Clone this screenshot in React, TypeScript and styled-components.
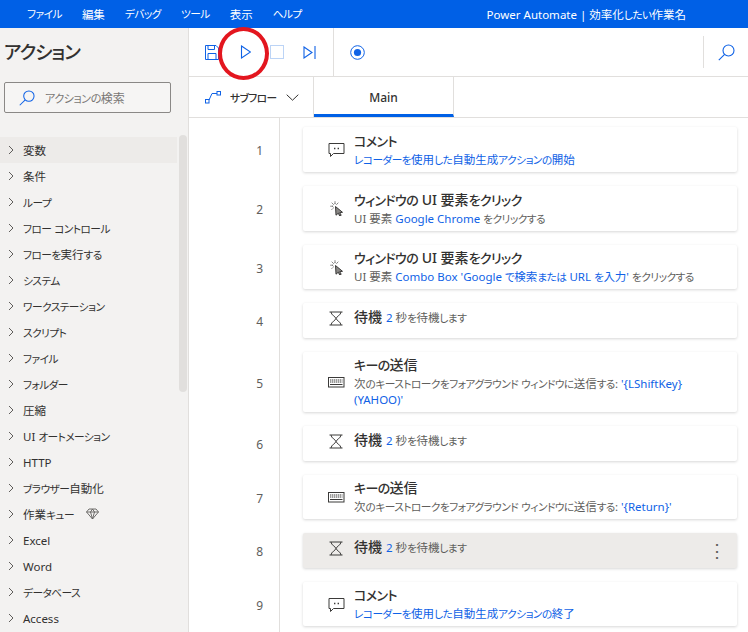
import React from 'react'
import styled, { createGlobalStyle } from 'styled-components'

const blue = '#0f62e6'
const jp = `"Noto Sans", "Noto Sans CJK JP", sans-serif`

const actions = [
  '変数', '条件', 'ループ', 'フロー コントロール', 'フローを実行する', 'システム', 'ワークステーション',
  'スクリプト', 'ファイル', 'フォルダー', '圧縮', 'UI オートメーション', 'HTTP', 'ブラウザー自動化',
  '作業キュー', 'Excel', 'Word', 'データベース', 'Access',
]

const menus = ['ファイル', '編集', 'デバッグ', 'ツール', '表示', 'ヘルプ']

// the original font has much narrower kana than kanji, so kana runs get their own span
function T({ children }: { children: string }) {
  return (
    <>
      {children.split(/([\u3040-\u30ff]+)/).map((part, i) =>
        i % 2 === 1 ? <Kana key={i}>{part}</Kana> : part
      )}
    </>
  )
}

const ChatIcon = () => (
  <svg width="17" height="17" viewBox="0 0 17 17" fill="none" stroke="#3b3a39" strokeWidth="1">
    <path d="M1 2.5h15v10H5.5L2.5 15.5v-3H1z" />
    <path d="M6 7.5h1.4M9.6 7.5H11" strokeWidth="1.6" />
  </svg>
)

const ClickIcon = () => (
  <ClickSvg width="14" height="15" viewBox="0 0 14 15" fill="none" stroke="#3b3a39" strokeWidth="1">
    <path d="M5.5 5.5l7 5.8-2.8.4 1.5 2.6-1.5.7-1.4-2.8-2.3 2z" fill="#8a8886" />
    <path d="M5 .5v2.6M.5 5.2h2.6M1.8 1.8l1.7 1.7M8.2 1.8L6.6 3.5M1.8 8.5l1.7-1.7" strokeDasharray="1.1 0.5" />
  </ClickSvg>
)

const HourglassIcon = () => (
  <HourglassSvg width="14" height="15" viewBox="0 0 14 15" fill="none" stroke="#3b3a39" strokeWidth="1">
    <path d="M.5 1h13M.5 14h13M2 1c0 3 5 5 5 6.5s-5 3.5-5 6.5M12 1c0 3-5 5-5 6.5s5 3.5 5 6.5" />
  </HourglassSvg>
)

const KeyboardIcon = () => (
  <svg width="17" height="11" viewBox="0 0 17 11" fill="none" stroke="#3b3a39" strokeWidth="1">
    <rect x="0.5" y="0.5" width="15.5" height="9.5" />
    <path d="M2 3h12.5M2 5h12.5" strokeDasharray="1.4 0.6" />
    <path d="M2 7.5h12.5" />
  </svg>
)

const SearchIcon = ({ size }: { size: number }) => (
  <svg width={size} height={size} viewBox="0 0 17 17" fill="none" stroke={blue} strokeWidth="1.1">
    <circle cx="10.5" cy="6.5" r="5.5" />
    <path d="M6.6 10.4L0.8 16.2" />
  </svg>
)

const Chevron = () => (
  <svg width="6" height="10" viewBox="0 0 6 10" fill="none" stroke="#605e5c" strokeWidth="1">
    <path d="M1 1l4 4-4 4" />
  </svg>
)

const icons = {
  chat: <ChatIcon />,
  click: <ClickIcon />,
  wait: <HourglassIcon />,
  key: <KeyboardIcon />,
}

type Step = {
  icon: keyof typeof icons
  title: string
  height: number
  inline?: boolean
  active?: boolean
  body: React.ReactNode
}

const steps: Step[] = [
  { icon: 'chat', title: 'コメント', height: 45, body: <Link><T>レコーダーを使用した自動生成アクションの開始</T></Link> },
  { icon: 'click', title: 'ウィンドウの UI 要素をクリック', height: 45, body: <>UI 要素 <Link>Google Chrome</Link> <T>をクリックする</T></> },
  { icon: 'click', title: 'ウィンドウの UI 要素をクリック', height: 44, body: <>UI 要素 <Link><T>{"Combo Box 'Google で検索または URL を入力'"}</T></Link> <T>をクリックする</T></> },
  { icon: 'wait', title: '待機', height: 35, inline: true, body: <><Link>2</Link> <T>秒を待機します</T></> },
  { icon: 'key', title: 'キーの送信', height: 60, body: <><T>次のキーストロークをフォアグラウンド ウィンドウに送信する:</T> <Link>{"'{LShiftKey}"}</Link> <Link>{"(YAHOO)'"}</Link></> },
  { icon: 'wait', title: '待機', height: 35, inline: true, body: <><Link>2</Link> <T>秒を待機します</T></> },
  { icon: 'key', title: 'キーの送信', height: 44, body: <><T>次のキーストロークをフォアグラウンド ウィンドウに送信する:</T> <Link>{"'{Return}'"}</Link></> },
  { icon: 'wait', title: '待機', height: 35, inline: true, active: true, body: <><Link>2</Link> <T>秒を待機します</T></> },
  { icon: 'chat', title: 'コメント', height: 44, body: <Link><T>レコーダーを使用した自動生成アクションの終了</T></Link> },
]

export default function App() {
  return (
    <Page>
      <GlobalStyle />
      <MenuBar>
        <MenuList>
          {menus.map(m => <MenuItem key={m}><T>{m}</T></MenuItem>)}
        </MenuList>
        <WindowTitle>Power Automate | <T>効率化したい作業名</T></WindowTitle>
      </MenuBar>

      <Body>
        <Sidebar>
          <SidebarTitle><T>アクション</T></SidebarTitle>
          <SearchBox>
            <SearchIcon size={16} />
            <SearchText><T>アクションの検索</T></SearchText>
          </SearchBox>
          <ActionArea>
            <ActionList>
              {actions.map((a, i) => (
                <ActionRow key={a} $hover={i === 0}>
                  <Chevron />
                  <span><T>{a}</T></span>
                  {a === '作業キュー' && (
                    <Gem width="13" height="12" viewBox="0 0 13 12" fill="none" stroke="#605e5c" strokeWidth="0.9">
                      <path d="M3 1h7l2.5 3L6.5 11 .5 4zM.5 4h12M4.5 4l2 7 2-7M4.5 4L6.5 1l2 3" />
                    </Gem>
                  )}
                </ActionRow>
              ))}
            </ActionList>
            <ScrollThumb />
          </ActionArea>
        </Sidebar>

        <Main>
          <Toolbar>
            <ToolGroup>
              <svg width="14" height="15" viewBox="0 0 14 15" fill="none" stroke={blue} strokeWidth="1">
                <path d="M.5 .5h10.5l2.5 2.5v11.5H.5z" />
                <path d="M3 .5v4h6.5v-4M3 14.5v-6h8v6" />
              </svg>
              <svg width="13" height="14" viewBox="0 0 13 14" fill="none" stroke={blue} strokeWidth="1.1">
                <path d="M3.5 1l9 6-9 6z" />
              </svg>
              <StopButton />
              <svg width="13" height="13" viewBox="0 0 13 13" fill="none" stroke={blue} strokeWidth="1.1">
                <path d="M1 1l8 5.5-8 5.5zM12 0v13" />
              </svg>
            </ToolGroup>
            <RecordGroup>
              <svg width="15" height="15" viewBox="0 0 15 15">
                <circle cx="7.5" cy="7.5" r="6.8" fill="none" stroke={blue} strokeWidth="1" />
                <circle cx="7.5" cy="7.5" r="3.6" fill={blue} />
              </svg>
            </RecordGroup>
            <ToolSearch>
              <SearchIcon size={17} />
            </ToolSearch>
          </Toolbar>

          <TabBar>
            <SubflowTab>
              <svg width="16" height="13" viewBox="0 0 16 13" fill="none" stroke={blue} strokeWidth="1">
                <rect x="0.5" y="8.5" width="3.5" height="3.5" />
                <rect x="12" y="0.5" width="3.5" height="3.5" />
                <path d="M4 9l3-6.5h5" />
              </svg>
              <TabLabel><T>サブフロー</T></TabLabel>
              <TabChevron width="13" height="7" viewBox="0 0 13 7" fill="none" stroke="#323130" strokeWidth="1">
                <path d="M.7 .7l5.8 5.5L12.3 .7" />
              </TabChevron>
            </SubflowTab>
            <MainTab>Main</MainTab>
          </TabBar>

          <StepList>
            {steps.map((s, i) => (
              <StepRow key={i} $height={s.height} $top={i === 0 ? 9 : 0}>
                <LineNo $top={i === 0 ? 9 : 0}>{i + 1}</LineNo>
                <StepCell $top={i === 0 ? 9 : 0}>
                  <Card $active={s.active} $inline={s.inline}>
                    <IconSlot>{icons[s.icon]}</IconSlot>
                    <StepText $inline={s.inline}>
                      <StepTitle><T>{s.title}</T></StepTitle>
                      <StepBody>{s.body}</StepBody>
                    </StepText>
                    {s.active && <MoreDots>⋮</MoreDots>}
                  </Card>
                </StepCell>
              </StepRow>
            ))}
          </StepList>
        </Main>
      </Body>

      <RedCircle />
    </Page>
  )
}

function Link({ children }: { children: React.ReactNode }) {
  return <LinkText>{children}</LinkText>
}

const GlobalStyle = createGlobalStyle`
  html, body {
    margin: 0;
    padding: 0;
    overflow: hidden;
    font-family: ${jp};
    font-feature-settings: "palt";
  }
`

const Kana = styled.span`
  font-size: 0.93em;
  letter-spacing: -0.05em;
`

const Page = styled.div`
  position: relative;
  width: 748px;
  height: 632px;
  overflow: hidden;
  background: #fff;
`

const MenuBar = styled.div`
  height: 28px;
  display: flex;
  align-items: center;
  background: #0060e6;
  color: #fff;
  font-size: 11.5px;
`

const MenuList = styled.div`
  display: flex;
  gap: 20px;
  padding-left: 27px;
`

const MenuItem = styled.span`
  white-space: nowrap;
`

const WindowTitle = styled.div`
  margin-left: auto;
  padding-right: 62px;
  white-space: nowrap;
`

const Body = styled.div`
  display: flex;
  height: 604px;
`

const Sidebar = styled.div`
  width: 188px;
  flex-shrink: 0;
  background: #f3f2f1;
  border-right: 1px solid #e1dfdd;
  overflow: hidden;
`

const SidebarTitle = styled.div`
  padding: 10px 0 0 4px;
  height: 44px;
  box-sizing: border-box;
  font-size: 20px;
  font-weight: 500;
  line-height: 28px;
  color: #323130;
`

const SearchBox = styled.div`
  margin: 10px 0 0 4px;
  width: 167px;
  height: 31px;
  box-sizing: border-box;
  display: flex;
  align-items: center;
  gap: 10px;
  padding-left: 14px;
  background: #f6f5f4;
  border: 1px solid #8a8886;
  border-radius: 2px;
`

const SearchText = styled.span`
  font-size: 12px;
  color: #797775;
`

const ActionArea = styled.div`
  position: relative;
  margin-top: 24px;
`

const ActionList = styled.div`
  width: 177px;
`

const ActionRow = styled.div<{ $hover?: boolean }>`
  height: 26px;
  display: flex;
  align-items: center;
  gap: 9px;
  padding-left: 8px;
  font-size: 11.5px;
  color: #323130;
  white-space: nowrap;
  background: ${p => (p.$hover ? '#edebe9' : 'transparent')};
`

const Gem = styled.svg`
  margin-left: 3px;
`

const ScrollThumb = styled.div`
  position: absolute;
  top: -2px;
  left: 179px;
  width: 8px;
  height: 257px;
  border-radius: 4px;
  background: #e1dfdd;
`

const Main = styled.div`
  flex: 1;
  min-width: 0;
  display: flex;
  flex-direction: column;
`

const Toolbar = styled.div`
  height: 49px;
  flex-shrink: 0;
  box-sizing: border-box;
  display: flex;
  align-items: center;
  border-bottom: 1px solid #e1dfdd;
`

const ToolGroup = styled.div`
  width: 145px;
  height: 100%;
  box-sizing: border-box;
  display: flex;
  align-items: center;
  gap: 19px;
  padding-left: 16px;
  border-right: 1px solid #e1dfdd;
`

const StopButton = styled.div`
  width: 14px;
  height: 14px;
  box-sizing: border-box;
  border: 1px solid #bcd4f6;
`

const RecordGroup = styled.div`
  display: flex;
  align-items: center;
  padding-left: 16px;
`

const ToolSearch = styled.div`
  margin-left: auto;
  height: 32px;
  display: flex;
  align-items: center;
  padding: 0 13px 0 14px;
  border-left: 1px solid #e1dfdd;
`

const TabBar = styled.div`
  height: 41px;
  flex-shrink: 0;
  box-sizing: border-box;
  display: flex;
  border-bottom: 1px solid #e1dfdd;
`

const SubflowTab = styled.div`
  width: 125px;
  box-sizing: border-box;
  display: flex;
  align-items: center;
  padding-left: 16px;
  border-right: 1px solid #e1dfdd;
`

const TabLabel = styled.span`
  margin-left: 9px;
  font-size: 11.5px;
  font-weight: 500;
  color: #323130;
  white-space: nowrap;
`

const TabChevron = styled.svg`
  margin-left: auto;
  margin-right: 14px;
`

const MainTab = styled.div`
  width: 140px;
  box-sizing: border-box;
  display: flex;
  align-items: center;
  justify-content: center;
  padding-top: 3px;
  font-size: 12px;
  font-weight: 500;
  color: #323130;
  border-right: 1px solid #e1dfdd;
  border-bottom: 3px solid #0060e6;
`

const StepList = styled.div`
  flex: 1;
  min-height: 0;
  overflow: hidden;
`

const StepRow = styled.div<{ $height: number; $top: number }>`
  display: flex;
  height: ${p => p.$height + 14 + p.$top}px;
`

const LineNo = styled.div<{ $top: number }>`
  width: 91px;
  flex-shrink: 0;
  box-sizing: border-box;
  display: flex;
  align-items: center;
  justify-content: flex-end;
  padding: ${p => p.$top + 1}px 16px 13px 0;
  font-size: 12px;
  color: #605e5c;
  border-right: 1px solid #e1dfdd;
`

const StepCell = styled.div<{ $top: number }>`
  flex: 1;
  min-width: 0;
  box-sizing: border-box;
  padding: ${p => p.$top}px 11px 14px 23px;
`

const Card = styled.div<{ $active?: boolean; $inline?: boolean }>`
  position: relative;
  height: 100%;
  box-sizing: border-box;
  display: flex;
  align-items: ${p => (p.$inline ? 'flex-start' : 'center')};
  padding: ${p => (p.$inline ? '5px 34px 0 25px' : '0 34px 0 25px')};
  background: ${p => (p.$active ? '#edebe9' : '#fff')};
  border-radius: 2px;
  box-shadow: 0 1px 3px rgba(0, 0, 0, 0.16);
`

const IconSlot = styled.div`
  width: 26px;
  flex-shrink: 0;
  display: flex;
  align-items: center;
  min-height: 20px;
`

const ClickSvg = styled.svg`
  margin-left: 2px;
`

const HourglassSvg = styled.svg`
  margin-left: 1px;
`

const StepText = styled.div<{ $inline?: boolean }>`
  min-width: 0;
  display: ${p => (p.$inline ? 'flex' : 'block')};
  align-items: baseline;
  gap: 4px;
`

const StepTitle = styled.div`
  font-size: 14px;
  font-weight: 500;
  line-height: 18px;
  margin-bottom: 2px;
  color: #323130;
`

const StepBody = styled.div`
  font-size: 11.5px;
  line-height: 16px;
  color: #605e5c;
`

const LinkText = styled.span`
  color: ${blue};
`

const MoreDots = styled.div`
  position: absolute;
  right: 11px;
  top: 5px;
  font-size: 18px;
  line-height: 24px;
  color: #605e5c;
`

const RedCircle = styled.div`
  position: absolute;
  left: 218px;
  top: 27px;
  width: 51px;
  height: 53px;
  box-sizing: border-box;
  border: 4px solid #e3161f;
  border-radius: 50%;
`
